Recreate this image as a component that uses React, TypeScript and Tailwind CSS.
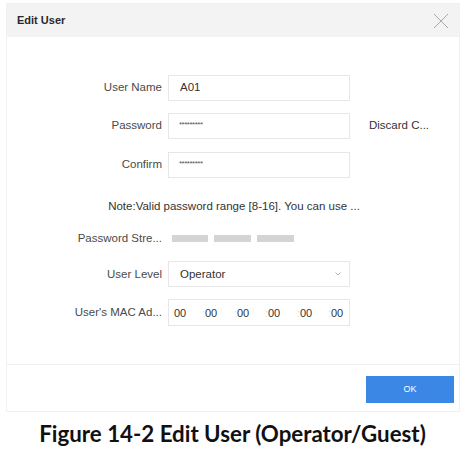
import React from "react";

const labelCls = "w-[90px] text-right text-[11.5px] text-[#4a4a4a] whitespace-nowrap";

function Row({ label, children, mt }: { label: string; children: React.ReactNode; mt: string }) {
  return (
    <div className={`flex items-center ${mt}`}>
      <div className={labelCls}>{label}</div>
      <div className="ml-[6px]">{children}</div>
    </div>
  );
}

export default function App() {
  return (
    <div className="w-[473px] h-[456px] bg-white relative" style={{ fontFamily: '"Liberation Sans", Arial, sans-serif' }}>
      <div className="absolute left-[6px] top-[3px] w-[454px] h-[409px] border border-[#f1f1f1] flex flex-col">
        <div className="h-[33px] bg-[#f3f3f3] flex items-center justify-between pl-[10px] pr-[10px] shrink-0">
          <span className="text-[11px] font-bold text-[#2a2a2a]">Edit User</span>
          <svg width="16" height="16" viewBox="0 0 16 16">
            <path d="M1 1 L15 15 M15 1 L1 15" stroke="#a8a8a8" strokeWidth="1" fill="none" />
          </svg>
        </div>
        <div className="h-[327px] shrink-0 pl-[65px] pt-[38px] relative">
          <Row label="User Name" mt="mt-0">
            <div className="w-[182px] h-[26px] border border-[#e6e6e6] flex items-center pl-[11px] text-[11.5px] text-[#333]">A01</div>
          </Row>
          <div className="flex items-center mt-[12px]">
            <div className={labelCls}>Password</div>
            <div className="ml-[6px] w-[182px] h-[26px] border border-[#e6e6e6] flex items-start pt-[5px] pl-[10px] text-[8px] text-[#555] tracking-[-0.5px]">*********</div>
            <div className="ml-[19px] text-[11.5px] text-[#333] whitespace-nowrap">Discard C...</div>
          </div>
          <Row label="Confirm" mt="mt-[13px]">
            <div className="w-[182px] h-[26px] border border-[#e6e6e6] flex items-start pt-[5px] pl-[10px] text-[8px] text-[#555] tracking-[-0.5px]">*********</div>
          </Row>
          <div className="-ml-[65px] w-[454px] text-center mt-[22px] text-[11.5px] text-[#333] leading-[13px]">Note:Valid password range [8-16]. You can use ...</div>
          <div className="flex items-center mt-[17px]">
            <div className={labelCls}>Password Stre...</div>
            <div className="ml-[10px] flex gap-[6px]">
              <div className="w-[36px] h-[7px] bg-[#d4d4d4]" />
              <div className="w-[37px] h-[7px] bg-[#d4d4d4]" />
              <div className="w-[37px] h-[7px] bg-[#d4d4d4]" />
            </div>
          </div>
          <Row label="User Level" mt="mt-[14px]">
            <div className="w-[182px] h-[26px] border border-[#e6e6e6] flex items-center justify-between pl-[11px] pr-[8px] text-[11.5px] text-[#333]">
              <span>Operator</span>
              <svg width="6" height="4" viewBox="0 0 6 4"><path d="M0.5 0.5 L3 3 L5.5 0.5" stroke="#aaa" fill="none" strokeWidth="0.9" /></svg>
            </div>
          </Row>
          <Row label="User's MAC Ad..." mt="mt-[12px]">
            <div className="w-[182px] h-[27px] border border-[#e6e6e6] flex items-center pl-[5px] text-[11px] text-[#333]">
              <span className="w-[28px]">00</span>
              <span className="w-[3px] text-[#ddd]">:</span>
              <span className="w-[29px]">00</span>
              <span className="w-[3px] text-[#ddd]">:</span>
              <span className="w-[28px]">00</span>
              <span className="w-[3px] text-[#ddd]">:</span>
              <span className="w-[29px]">00</span>
              <span className="w-[3px] text-[#ddd]">:</span>
              <span className="w-[28px]">00</span>
              <span className="w-[3px] text-[#ddd]">:</span>
              <span>00</span>
            </div>
          </Row>
        </div>
        <div className="border-t border-[#f0f0f0] flex-1 flex justify-end items-start pt-[11px] pr-[5px]">
          <div className="w-[88px] h-[27px] bg-[#3b87e6] flex items-center justify-center text-[9px] text-white">OK</div>
        </div>
      </div>
      <div className="absolute left-0 w-[465px] top-[417px] text-center text-[22.3px] font-bold text-[#111] whitespace-nowrap" style={{ fontFamily: 'Lato, "Open Sans", sans-serif' }}>
        Figure 14-2 Edit User (Operator/Guest)
      </div>
    </div>
  );
}
